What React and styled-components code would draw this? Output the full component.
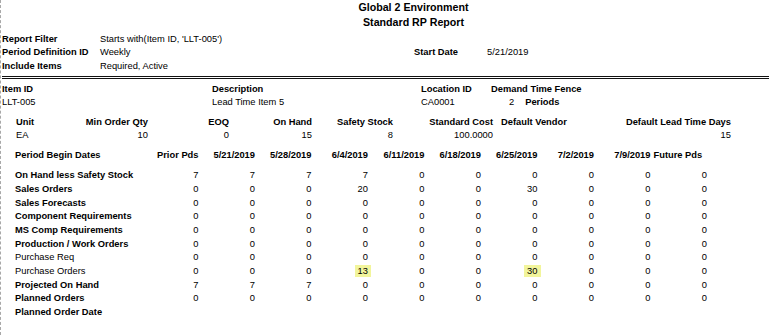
import React from 'react';
import styled, { createGlobalStyle } from 'styled-components';

const GlobalStyle = createGlobalStyle`
    body {
        margin: 0;
        background: #ffffff;
        font-family: "Liberation Sans", Arial, sans-serif;
        font-size: 9.33px;
        color: #000000;
    }
`;

const Page = styled.div`
    width: 769px;
    min-height: 335px;
    box-sizing: border-box;
    border-left: 1px dashed #a8a8a8;
    padding-left: 1px;
`;

const Title = styled.div`
    padding-left: 56px;
    text-align: center;
    font-size: 10.67px;
    font-weight: bold;
    line-height: 15px;
`;

const FilterGrid = styled.div`
    display: grid;
    grid-template-columns: 98px 314px 73px 1fr;
    grid-auto-rows: 13.5px;
    align-items: center;
    margin-top: 2px;
    padding-bottom: 3px;
    border-bottom: 3px double #111111;
`;

const Label = styled.div`
    font-weight: bold;
    white-space: nowrap;
`;

const Value = styled.div`
    white-space: nowrap;
`;

const ItemGrid = styled.div`
    display: grid;
    grid-template-columns: 210px 209px 70px 1fr;
    grid-auto-rows: 13px;
    align-items: center;
    padding-top: 4px;
`;

const Fence = styled.div`
    display: flex;
    gap: 11px;
    padding-left: 18px;
`;

const MetricsGrid = styled.div`
    display: grid;
    grid-template-columns: 55px 77px 81px 83px 81px 100px 108px 130px;
    grid-auto-rows: 13px;
    align-items: center;
    margin: 7px 0 0 14px;
`;

const Cell = styled.div`
    text-align: ${p => p.$align || 'right'};
    font-weight: ${p => (p.$bold ? 'bold' : 'normal')};
    padding-left: ${p => p.$pad || 0}px;
    white-space: nowrap;
`;

const PeriodGrid = styled.div`
    display: grid;
    grid-template-columns: 128px repeat(10, 56.5px);
    grid-template-rows: 13.67px 6.3px;
    grid-auto-rows: 13.67px;
    align-items: center;
    margin: 7px 0 0 12px;
`;

const Row = styled.div`
    display: contents;
`;

const Spacer = styled.div`
    grid-column: 1 / -1;
`;

const Highlight = styled.span`
    display: inline-block;
    background: #f2f59c;
    line-height: 12px;
    padding: 0 3px 0 3px;
    margin-right: -3px;
`;

const metrics = [
    { label: 'Unit', value: 'EA', align: 'left' },
    { label: 'Min Order Qty', value: '10' },
    { label: 'EOQ', value: '0' },
    { label: 'On Hand', value: '15' },
    { label: 'Safety Stock', value: '8' },
    { label: 'Standard Cost', value: '100.0000' },
    { label: 'Default Vendor', value: '', align: 'left', pad: 8 },
    { label: 'Default Lead Time Days', value: '15' },
];

const periods = ['Prior Pds', '5/21/2019', '5/28/2019', '6/4/2019', '6/11/2019', '6/18/2019', '6/25/2019', '7/2/2019', '7/9/2019'];

const zeros = [0, 0, 0, 0, 0, 0, 0, 0, 0, 0];

const rows = [
    { label: 'On Hand less Safety Stock', bold: true, values: [7, 7, 7, 7, 0, 0, 0, 0, 0, 0] },
    { label: 'Sales Orders', bold: true, values: [0, 0, 0, 20, 0, 0, 30, 0, 0, 0] },
    { label: 'Sales Forecasts', bold: true, values: zeros },
    { label: 'Component Requirements', bold: true, values: zeros },
    { label: 'MS Comp Requirements', bold: true, values: zeros },
    { label: 'Production / Work Orders', bold: true, values: zeros },
    { label: 'Purchase Req', values: zeros },
    { label: 'Purchase Orders', values: [0, 0, 0, 13, 0, 0, 30, 0, 0, 0], marked: [3, 6] },
    { label: 'Projected On Hand', bold: true, values: [7, 7, 7, 0, 0, 0, 0, 0, 0, 0] },
    { label: 'Planned Orders', bold: true, values: zeros },
    { label: 'Planned Order Date', bold: true, values: [] },
];

const App = () => {
    return (
        <Page>
            <GlobalStyle />
            <Title>
                <div>Global 2 Environment</div>
                <div>Standard RP Report</div>
            </Title>

            <FilterGrid>
                <Label>Report Filter</Label>
                <Value>Starts with(Item ID, 'LLT-005')</Value>
                <div />
                <div />
                <Label>Period Definition ID</Label>
                <Value>Weekly</Value>
                <Label>Start Date</Label>
                <Value>5/21/2019</Value>
                <Label>Include Items</Label>
                <Value>Required, Active</Value>
            </FilterGrid>

            <ItemGrid>
                <Label>Item ID</Label>
                <Label>Description</Label>
                <Label>Location ID</Label>
                <Label>Demand Time Fence</Label>
                <Value>LLT-005</Value>
                <Value>Lead Time Item 5</Value>
                <Value>CA0001</Value>
                <Fence>
                    <span>2</span>
                    <Label>Periods</Label>
                </Fence>
            </ItemGrid>

            <MetricsGrid>
                {metrics.map(m => (
                    <Cell key={m.label} $bold $align={m.align} $pad={m.pad}>{m.label}</Cell>
                ))}
                {metrics.map(m => (
                    <Cell key={m.label + '-v'} $align={m.align} $pad={m.pad}>{m.value}</Cell>
                ))}
            </MetricsGrid>

            <PeriodGrid>
                <Row>
                    <Cell $bold $align="left" $pad={1}>Period Begin Dates</Cell>
                    {periods.map(p => (
                        <Cell key={p} $bold>{p}</Cell>
                    ))}
                    <Cell $bold $align="left" $pad={3}>Future Pds</Cell>
                </Row>
                <Spacer />
                {rows.map(r => (
                    <Row key={r.label}>
                        <Cell $bold={r.bold} $align="left" $pad={1}>{r.label}</Cell>
                        {r.values.map((v, i) => (
                            <Cell key={i}>
                                {r.marked && r.marked.includes(i) ? <Highlight>{v}</Highlight> : v}
                            </Cell>
                        ))}
                    </Row>
                ))}
            </PeriodGrid>
        </Page>
    );
};

export default App;
